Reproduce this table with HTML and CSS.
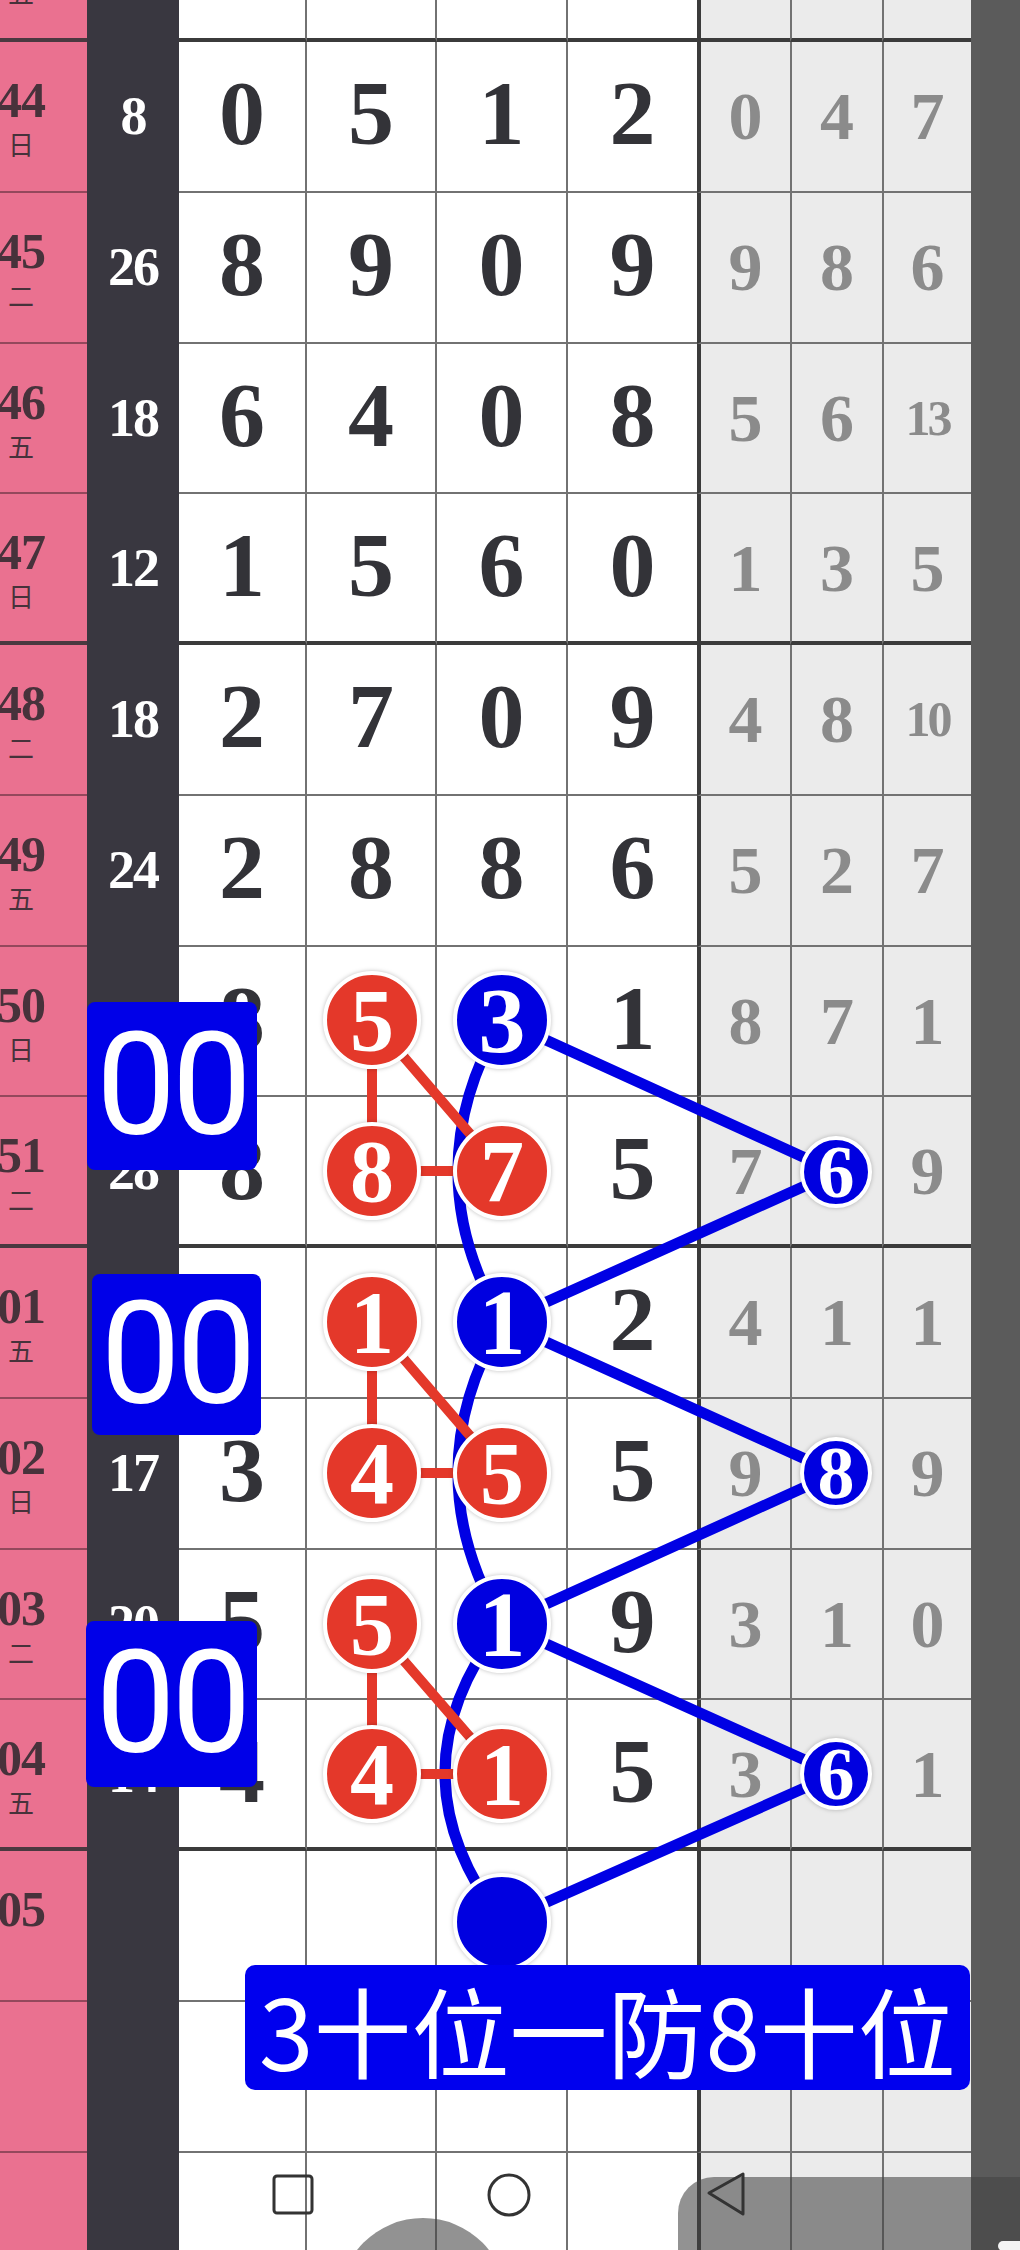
FILE: index.html
```html
<!DOCTYPE html>
<html>
<head>
    <meta charset="utf-8">
    <title>走势图</title>
    <link rel="stylesheet" href="styles.css">
</head>
<body>
    <div class="board">
        <div class="row top end">
            <div class="cell day"><div class="tag"><b>43</b><span>五</span></div></div>
            <div class="cell sum">20</div>
            <div class="cell num">3</div><div class="cell num">6</div><div class="cell num">4</div><div class="cell num">7</div>
            <div class="cell miss">2</div><div class="cell miss">5</div><div class="cell miss">3</div>
            <div class="cell rail"></div>
        </div>
        <div class="row">
            <div class="cell day"><div class="tag"><b>44</b><span>日</span></div></div>
            <div class="cell sum">8</div>
            <div class="cell num">0</div><div class="cell num">5</div><div class="cell num">1</div><div class="cell num">2</div>
            <div class="cell miss">0</div><div class="cell miss">4</div><div class="cell miss">7</div>
            <div class="cell rail"></div>
        </div>
        <div class="row">
            <div class="cell day"><div class="tag"><b>45</b><span>二</span></div></div>
            <div class="cell sum">26</div>
            <div class="cell num">8</div><div class="cell num">9</div><div class="cell num">0</div><div class="cell num">9</div>
            <div class="cell miss">9</div><div class="cell miss">8</div><div class="cell miss">6</div>
            <div class="cell rail"></div>
        </div>
        <div class="row">
            <div class="cell day"><div class="tag"><b>46</b><span>五</span></div></div>
            <div class="cell sum">18</div>
            <div class="cell num">6</div><div class="cell num">4</div><div class="cell num">0</div><div class="cell num">8</div>
            <div class="cell miss">5</div><div class="cell miss">6</div><div class="cell miss small">13</div>
            <div class="cell rail"></div>
        </div>
        <div class="row end">
            <div class="cell day"><div class="tag"><b>47</b><span>日</span></div></div>
            <div class="cell sum">12</div>
            <div class="cell num">1</div><div class="cell num">5</div><div class="cell num">6</div><div class="cell num">0</div>
            <div class="cell miss">1</div><div class="cell miss">3</div><div class="cell miss">5</div>
            <div class="cell rail"></div>
        </div>
        <div class="row">
            <div class="cell day"><div class="tag"><b>48</b><span>二</span></div></div>
            <div class="cell sum">18</div>
            <div class="cell num">2</div><div class="cell num">7</div><div class="cell num">0</div><div class="cell num">9</div>
            <div class="cell miss">4</div><div class="cell miss">8</div><div class="cell miss small">10</div>
            <div class="cell rail"></div>
        </div>
        <div class="row">
            <div class="cell day"><div class="tag"><b>49</b><span>五</span></div></div>
            <div class="cell sum">24</div>
            <div class="cell num">2</div><div class="cell num">8</div><div class="cell num">8</div><div class="cell num">6</div>
            <div class="cell miss">5</div><div class="cell miss">2</div><div class="cell miss">7</div>
            <div class="cell rail"></div>
        </div>
        <div class="row">
            <div class="cell day"><div class="tag"><b>50</b><span>日</span></div></div>
            <div class="cell sum">17</div>
            <div class="cell num">8</div><div class="cell num"></div><div class="cell num"></div><div class="cell num">1</div>
            <div class="cell miss">8</div><div class="cell miss">7</div><div class="cell miss">1</div>
            <div class="cell rail"></div>
        </div>
        <div class="row end">
            <div class="cell day"><div class="tag"><b>51</b><span>二</span></div></div>
            <div class="cell sum">28</div>
            <div class="cell num">8</div><div class="cell num"></div><div class="cell num"></div><div class="cell num">5</div>
            <div class="cell miss">7</div><div class="cell miss"></div><div class="cell miss">9</div>
            <div class="cell rail"></div>
        </div>
        <div class="row">
            <div class="cell day"><div class="tag"><b>01</b><span>五</span></div></div>
            <div class="cell sum">5</div>
            <div class="cell num">1</div><div class="cell num"></div><div class="cell num"></div><div class="cell num">2</div>
            <div class="cell miss">4</div><div class="cell miss">1</div><div class="cell miss">1</div>
            <div class="cell rail"></div>
        </div>
        <div class="row">
            <div class="cell day"><div class="tag"><b>02</b><span>日</span></div></div>
            <div class="cell sum">17</div>
            <div class="cell num">3</div><div class="cell num"></div><div class="cell num"></div><div class="cell num">5</div>
            <div class="cell miss">9</div><div class="cell miss"></div><div class="cell miss">9</div>
            <div class="cell rail"></div>
        </div>
        <div class="row">
            <div class="cell day"><div class="tag"><b>03</b><span>二</span></div></div>
            <div class="cell sum">20</div>
            <div class="cell num">5</div><div class="cell num"></div><div class="cell num"></div><div class="cell num">9</div>
            <div class="cell miss">3</div><div class="cell miss">1</div><div class="cell miss">0</div>
            <div class="cell rail"></div>
        </div>
        <div class="row end">
            <div class="cell day"><div class="tag"><b>04</b><span>五</span></div></div>
            <div class="cell sum">14</div>
            <div class="cell num">4</div><div class="cell num"></div><div class="cell num"></div><div class="cell num">5</div>
            <div class="cell miss">3</div><div class="cell miss"></div><div class="cell miss">1</div>
            <div class="cell rail"></div>
        </div>
        <div class="row">
            <div class="cell day"><div class="tag"><b>05</b></div></div>
            <div class="cell sum"></div>
            <div class="cell num"></div><div class="cell num"></div><div class="cell num"></div><div class="cell num"></div>
            <div class="cell miss"></div><div class="cell miss"></div><div class="cell miss"></div>
            <div class="cell rail"></div>
        </div>
        <div class="row">
            <div class="cell day"></div>
            <div class="cell sum"></div>
            <div class="cell num"></div><div class="cell num"></div><div class="cell num"></div><div class="cell num"></div>
            <div class="cell miss"></div><div class="cell miss"></div><div class="cell miss"></div>
            <div class="cell rail"></div>
        </div>
        <div class="row">
            <div class="cell day"></div>
            <div class="cell sum"></div>
            <div class="cell num"></div><div class="cell num"></div><div class="cell num"></div><div class="cell num"></div>
            <div class="cell miss"></div><div class="cell miss"></div><div class="cell miss"></div>
            <div class="cell rail"></div>
        </div>
    </div>

    <!-- hand drawn marks on top of the chart -->
    <svg class="marks" width="1020" height="2250" viewBox="0 0 1020 2250">
        <g class="blue-line">
            <path d="M502 1020 Q414 1171 502 1322"/>
            <path d="M502 1322 Q414 1473 502 1624"/>
            <path d="M502 1624 Q388 1773 502 1922"/>
            <path d="M502 1020 L836 1172"/>
            <path d="M836 1172 L502 1322"/>
            <path d="M502 1322 L836 1473"/>
            <path d="M836 1473 L502 1624"/>
            <path d="M502 1624 L836 1774"/>
            <path d="M836 1774 L502 1922"/>
        </g>
        <g class="red-line">
            <path d="M372 1020 V1171 H502 M372 1020 L502 1171"/>
            <path d="M372 1322 V1473 H502 M372 1322 L502 1473"/>
            <path d="M372 1624 V1774 H502 M372 1624 L502 1774"/>
        </g>
        <g class="red-ball">
            <circle cx="372" cy="1020" r="47"/><text x="372" y="1050">5</text>
            <circle cx="372" cy="1171" r="47"/><text x="372" y="1201">8</text>
            <circle cx="502" cy="1171" r="47"/><text x="502" y="1201">7</text>
            <circle cx="372" cy="1322" r="47"/><text x="372" y="1352">1</text>
            <circle cx="372" cy="1473" r="47"/><text x="372" y="1503">4</text>
            <circle cx="502" cy="1473" r="47"/><text x="502" y="1503">5</text>
            <circle cx="372" cy="1624" r="47"/><text x="372" y="1654">5</text>
            <circle cx="372" cy="1774" r="47"/><text x="372" y="1804">4</text>
            <circle cx="502" cy="1774" r="47"/><text x="502" y="1804">1</text>
        </g>
        <g class="blue-ball">
            <circle cx="502" cy="1020" r="47"/><text x="502" y="1052">3</text>
            <circle cx="502" cy="1322" r="47"/><text x="502" y="1354">1</text>
            <circle cx="502" cy="1624" r="47"/><text x="502" y="1656">1</text>
            <circle cx="502" cy="1922" r="47"/>
        </g>
        <g class="blue-ball small">
            <circle cx="836" cy="1172" r="34"/><text x="836" y="1197">6</text>
            <circle cx="836" cy="1473" r="34"/><text x="836" y="1498">8</text>
            <circle cx="836" cy="1774" r="34"/><text x="836" y="1799">6</text>
        </g>
    </svg>

    <div class="tag-box box1">00</div>
    <div class="tag-box box2">00</div>
    <div class="tag-box box3">00</div>
    <div class="note">3十位一防8十位</div>

    <!-- system navigation bar -->
    <svg class="navbar" width="1020" height="2250" viewBox="0 0 1020 2250">
        <circle class="ghost" cx="423" cy="2302" r="84"/>
        <rect class="ghost" x="678" y="2177" width="400" height="140" rx="36"/>
        <rect class="pill" x="998" y="2241" width="40" height="10" rx="5"/>
        <rect class="key" x="274" y="2176" width="38" height="37" rx="3"/>
        <circle class="key" cx="509" cy="2195" r="20"/>
        <path class="key" d="M709 2193 L743 2174 L743 2214 Z"/>
    </svg>
</body>
</html>
```

FILE: styles.css
```css
body {
    margin: 0;
    width: 1020px;
    height: 2250px;
    overflow: hidden;
    position: relative;
    background-color: #fff;
    font-family: "Liberation Serif", serif;
}

.board {
    display: flex;
    flex-direction: column;
    margin-top: -110px;
}

.row {
    display: grid;
    grid-template-columns: 87px 92px 128px 130px 131px 129px 93px 92px 89px 49px;
    height: 150.75px;
}
.row.top {
    height: 152px;
}

.cell {
    box-sizing: border-box;
    display: flex;
    align-items: center;
    justify-content: center;
    border-bottom: 2px solid #727272;
    font-weight: 700;
    line-height: 1;
}
.row.end .cell {
    border-bottom: 4px solid #3b3b3b;
}

/* period + weekday column, cut off on the left */
.day {
    display: block;
    overflow: hidden;
    background-color: #ea7190;
    padding-top: 33px;
}
.row .day {
    border-bottom-color: #94485c;
}
.row.end .day {
    border-bottom-color: #4a3940;
}
.tag {
    width: 42px;
    display: flex;
    flex-direction: column;
    align-items: center;
    color: #47323b;
}
.tag b {
    font-size: 50px;
    line-height: 50px;
    letter-spacing: -1px;
}
.tag span {
    margin-top: 6px;
    font-family: "Noto Sans CJK SC", sans-serif;
    font-weight: 400;
    font-size: 26px;
}

.sum {
    background-color: #393740;
    color: #fff;
    font-size: 54px;
    letter-spacing: -2px;
}
.row .sum,
.row.end .sum {
    border-bottom-color: transparent;
}

.num {
    color: #333338;
    font-size: 92px;
    padding-bottom: 6px;
    border-right: 2px solid #727272;
}
.num:nth-child(6) {
    border-right: none;
}

.miss {
    background-color: #ebebeb;
    color: #8b8b8b;
    font-size: 68px;
    border-left: 2px solid #727272;
}
.miss:nth-child(7) {
    border-left: 4px solid #3b3b3b;
}
.miss.small {
    font-size: 50px;
    letter-spacing: -3px;
}

.rail {
    background-color: #5b5b5b;
}
.row .rail,
.row.end .rail {
    border-bottom: none;
}

/* drawing layer */
.marks,
.navbar {
    position: absolute;
    left: 0;
    top: 0;
    pointer-events: none;
}

.blue-line path {
    fill: none;
    stroke: #0000e4;
    stroke-width: 11px;
    stroke-linecap: round;
}
.red-line path {
    fill: none;
    stroke: #e4382a;
    stroke-width: 10px;
}

.red-ball circle,
.blue-ball circle {
    stroke: #fff;
    stroke-width: 4px;
    filter: drop-shadow(0 0 2px rgba(0, 0, 0, 0.25));
}
.red-ball circle {
    fill: #e4382a;
}
.blue-ball circle {
    fill: #0000e0;
}
.red-ball text,
.blue-ball text {
    fill: #fff;
    font-family: "Liberation Serif", serif;
    font-weight: 700;
    text-anchor: middle;
}
.red-ball text {
    font-size: 88px;
}
.blue-ball text {
    font-size: 94px;
}
.blue-ball.small text {
    font-size: 74px;
}

.tag-box {
    position: absolute;
    display: flex;
    align-items: center;
    justify-content: center;
    background-color: #0000e8;
    color: #fff;
    border-radius: 8px;
    font-family: Roboto, "Noto Sans", sans-serif;
    font-size: 142px;
    line-height: 1;
    letter-spacing: -4px;
}
.box1 {
    left: 87px;
    top: 1002px;
    width: 170px;
    height: 168px;
}
.box2 {
    left: 92px;
    top: 1274px;
    width: 169px;
    height: 161px;
}
.box3 {
    left: 86px;
    top: 1621px;
    width: 171px;
    height: 166px;
}

.note {
    position: absolute;
    left: 245px;
    top: 1965px;
    width: 725px;
    height: 125px;
    box-sizing: border-box;
    padding-left: 14px;
    display: flex;
    align-items: center;
    background-color: #0000ee;
    color: #fff;
    border-radius: 10px;
    font-family: "Noto Sans CJK SC", sans-serif;
    font-size: 98px;
    line-height: 1;
    white-space: nowrap;
}

.navbar .ghost {
    fill: rgba(68, 68, 68, 0.58);
}
.navbar .pill {
    fill: #f4f4f4;
}
.navbar .key {
    fill: none;
    stroke: #333;
    stroke-width: 3px;
    stroke-linejoin: round;
}
```
